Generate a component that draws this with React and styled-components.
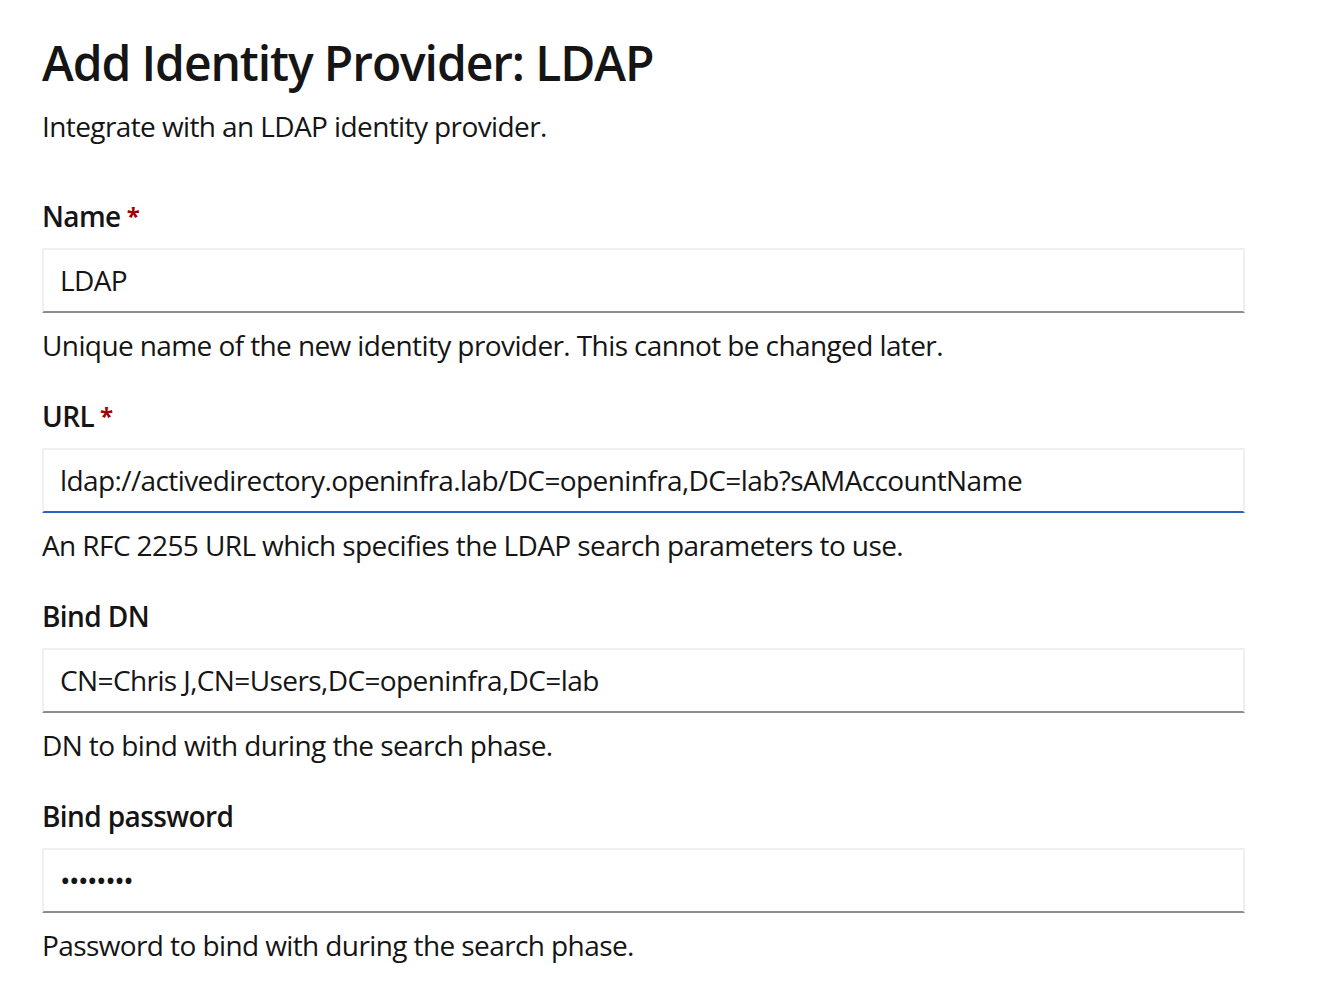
import React from "react"
import styled, { createGlobalStyle } from "styled-components"

const GlobalStyle = createGlobalStyle`
  html, body {
    margin: 0;
    padding: 0;
    background: #fff;
  }
  body {
    font-family: "Open Sans", "Liberation Sans", sans-serif;
    color: #151515;
  }
`

const fields = [
  {
    label: "Name",
    required: true,
    value: "LDAP",
    helper: "Unique name of the new identity provider. This cannot be changed later.",
  },
  {
    label: "URL",
    required: true,
    value: "ldap://activedirectory.openinfra.lab/DC=openinfra,DC=lab?sAMAccountName",
    helper: "An RFC 2255 URL which specifies the LDAP search parameters to use.",
    focused: true,
  },
  {
    label: "Bind DN",
    value: "CN=Chris J,CN=Users,DC=openinfra,DC=lab",
    helper: "DN to bind with during the search phase.",
  },
  {
    label: "Bind password",
    value: "••••••••",
    helper: "Password to bind with during the search phase.",
    password: true,
  },
]

const App = () => {
  return (
    <Page>
      <GlobalStyle />
      <Header>
        <Title>Add Identity Provider: LDAP</Title>
        <Subtitle>Integrate with an LDAP identity provider.</Subtitle>
      </Header>
      <Form>
        {fields.map((f) => (
          <Group key={f.label}>
            <Label>
              {f.label}
              {f.required && <Required>*</Required>}
            </Label>
            <Input $focused={f.focused} $password={f.password}>
              {f.value}
            </Input>
            <Helper>{f.helper}</Helper>
          </Group>
        ))}
      </Form>
    </Page>
  )
}

const Page = styled.div`
  padding: 34px 79px 0 42px;
  box-sizing: border-box;
  width: 1324px;
  letter-spacing: -0.6px;
`

const Header = styled.div`
  display: flex;
  flex-direction: column;
  gap: 13px;
`

const Title = styled.h1`
  margin: 0;
  font-size: 48px;
  font-weight: 600;
  line-height: 1.2;
  letter-spacing: -1.1px;
`

const Subtitle = styled.p`
  margin: 0;
  font-size: 28px;
  line-height: 1.5;
`

const Form = styled.div`
  display: flex;
  flex-direction: column;
  gap: 29px;
  margin-top: 48px;
`

const Group = styled.div`
  display: flex;
  flex-direction: column;
`

const Label = styled.div`
  font-size: 28px;
  font-weight: 600;
  line-height: 42px;
  margin-bottom: 11px;
`

const Required = styled.span`
  color: #a30000;
  margin-left: 6px;
  font-size: 24px;
  font-weight: 700;
  vertical-align: 2px;
`

const Input = styled.div`
  box-sizing: border-box;
  height: 65px;
  display: flex;
  align-items: center;
  padding: 0 16px;
  font-size: 28px;
  white-space: nowrap;
  border: 2px solid #f0f0f0;
  border-bottom-color: ${(p) => (p.$focused ? "#2b62c0" : "#8a8d90")};
  letter-spacing: ${(p) => (p.$password ? "-1.5px" : "inherit")};
`

const Helper = styled.div`
  font-size: 28px;
  line-height: 42px;
  margin-top: 11px;
`

export default App
